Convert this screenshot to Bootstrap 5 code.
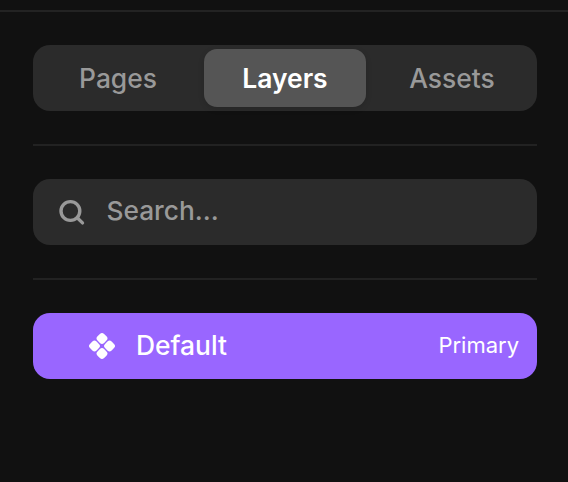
<!DOCTYPE html>
<html lang="en" data-bs-theme="dark">
<head>
<meta charset="utf-8">
<meta name="viewport" content="width=device-width, initial-scale=1">
<title>Layers</title>
<link href="https://cdn.jsdelivr.net/npm/bootstrap@5.3.0/dist/css/bootstrap.min.css" rel="stylesheet">
<style>
body{background:#111;font-family:Inter,sans-serif;font-weight:500;font-size:26.4px;line-height:1;height:482px;overflow:hidden}
.topline{height:10px;border-bottom:2px solid #232323;box-sizing:content-box}
.panel{padding:33px 31px 0 33px}
.bar{height:66px;border-radius:17px;background:#2b2b2b}
.tabs{padding:4px}
.tabs .nav-link{width:162px;height:58px;padding:0;color:#999;border-radius:13px;font-weight:500}
.tabs .nav-link.active{background:#555;color:#fff;font-weight:600;box-shadow:0 2px 6px rgba(0,0,0,.12)}
.rule{height:2px;margin:33px 0;background:#222}
.search{padding-left:25px;color:#999}
.search input{font-size:26.3px;font-weight:500;color:#999;line-height:1;padding:0 0 4px;margin-left:21.5px}
.search input::placeholder{color:#999;opacity:1}
.search input:focus{box-shadow:none;color:#fff}
.layer{background:#9966ff;color:#fff;padding:0 18px 0 55px}
.layer span{padding-bottom:2px}
.tag{font-size:22px;font-weight:400}
</style>
</head>
<body>
<div class="topline"></div>
<main class="panel">
<nav class="bar tabs nav justify-content-between">
<a class="nav-link d-flex align-items-center justify-content-center" href="#">Pages</a>
<a class="nav-link active d-flex align-items-center justify-content-center" href="#">Layers</a>
<a class="nav-link d-flex align-items-center justify-content-center" href="#">Assets</a>
</nav>
<div class="rule"></div>
<label class="bar search d-flex align-items-center">
<svg class="flex-shrink-0" width="27" height="27" viewBox="-.4 0 27 27" fill="none" stroke="currentColor" stroke-width="3.4" stroke-linecap="round"><circle cx="12" cy="12" r="9.4"/><path d="M18.8 18.8l5.3 5.1"/></svg>
<input class="form-control border-0 bg-transparent" type="text" placeholder="Search...">
</label>
<div class="rule"></div>
<div class="bar layer d-flex align-items-center">
<svg class="flex-shrink-0" width="28" height="28" viewBox="-.6 -.6 29.2 29.2" fill="currentColor"><g transform="rotate(45 14 14)"><rect x="3.6" y="3.6" width="9.7" height="9.7" rx="3.1"/><rect x="14.7" y="3.6" width="9.7" height="9.7" rx="3.1"/><rect x="3.6" y="14.7" width="9.7" height="9.7" rx="3.1"/><rect x="14.7" y="14.7" width="9.7" height="9.7" rx="3.1"/></g></svg>
<span class="ms-3 ps-1">Default</span>
<span class="tag ms-auto">Primary</span>
</div>
</main>
<script src="https://cdn.jsdelivr.net/npm/bootstrap@5.3.0/dist/js/bootstrap.bundle.min.js"></script>
</body>
</html>
